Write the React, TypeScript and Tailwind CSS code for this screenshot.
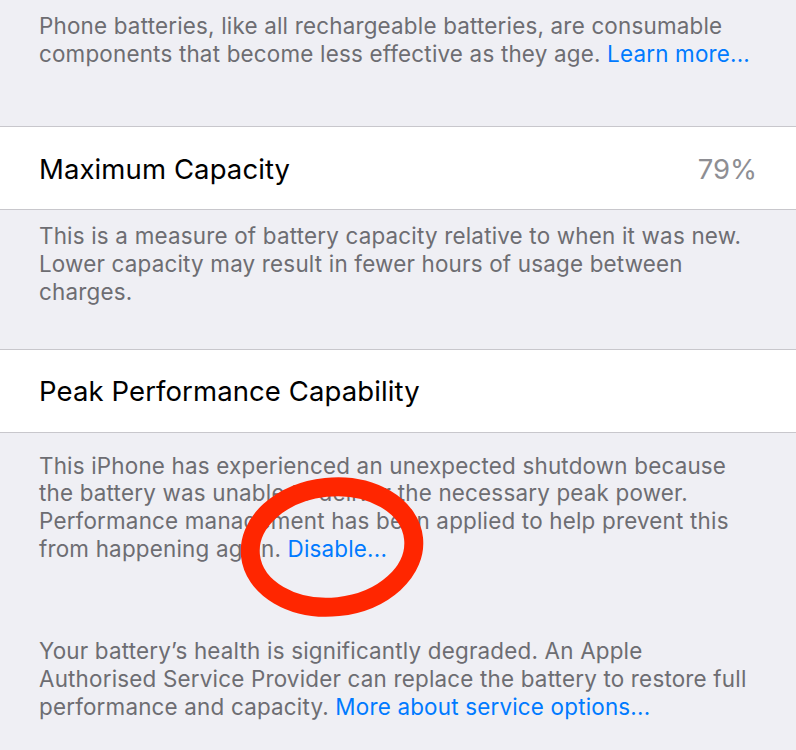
const footer = "px-[39px] text-[22.4px] leading-[27.7px] text-[#6d6d72] tracking-[0.2px] whitespace-nowrap";
const link = "text-[#007aff]";

function Row({ label, value }: { label: string; value?: string }) {
  return (
    <div className="flex h-[84px] items-center justify-between border-y border-[#c8c7cc] bg-white px-[39px] pt-[2px]">
      <span className="text-[27.5px] tracking-[0.1px] text-black">{label}</span>
      {value && <span className="text-[27.5px] text-[#8e8e93]">{value}</span>}
    </div>
  );
}

export default function App() {
  return (
    <div
      className="relative h-[750px] w-[796px] overflow-hidden bg-[#efeff4]"
      style={{ fontFamily: 'Inter, "Noto Sans", sans-serif' }}
    >
      <p className={`${footer} pt-3`}>
        Phone batteries, like all rechargeable batteries, are consumable
        <br />
        components that become less effective as they age. <span className={link}>Learn more...</span>
      </p>

      <div className="mt-[59px]">
        <Row label="Maximum Capacity" value="79%" />
      </div>
      <p className={`${footer} mt-[12px]`}>
        This is a measure of battery capacity relative to when it was new.
        <br />
        Lower capacity may result in fewer hours of usage between
        <br />
        charges.
      </p>

      <div className="mt-[43px]">
        <Row label="Peak Performance Capability" />
      </div>
      <p className={`${footer} mt-[19px]`}>
        This iPhone has experienced an unexpected shutdown because
        <br />
        the battery was unable to deliver the necessary peak power.
        <br />
        Performance management has been applied to help prevent this
        <br />
        from happening again. <span className={link}>Disable...</span>
      </p>

      <p className={`${footer} mt-[75px]`}>
        Your battery’s health is significantly degraded. An Apple
        <br />
        Authorised Service Provider can replace the battery to restore full
        <br />
        performance and capacity. <span className={link}>More about service options...</span>
      </p>

      <svg className="absolute left-[230px] top-[468px]" width="205" height="160" viewBox="0 0 205 160">
        <ellipse cx="102" cy="79" rx="82" ry="60" fill="none" stroke="#ff2600" strokeWidth="19" transform="rotate(-6 102 79)" />
      </svg>
    </div>
  );
}
